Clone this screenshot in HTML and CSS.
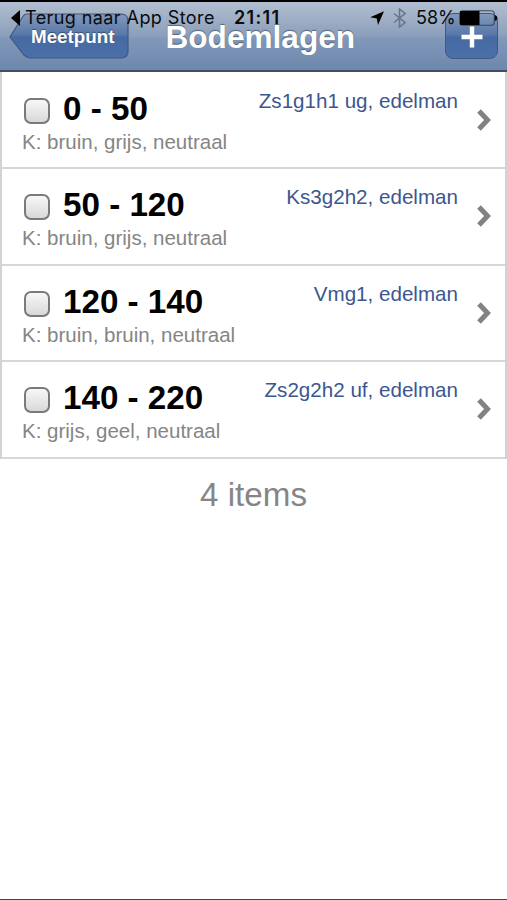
FILE: index.html
```html
<!DOCTYPE html>
<html lang="nl">
<head>
<meta charset="utf-8">
<title>Bodemlagen</title>
<link rel="stylesheet" href="styles.css">
</head>
<body>
<header class="navbar">
  <div class="back">
    <svg class="back-shape" width="120" height="48" viewBox="0 0 120 48">
      <defs><linearGradient id="b" x1="0" y1="0" x2="0" y2="1"><stop offset="0" stop-color="#8399ba"/><stop offset=".48" stop-color="#5877a8"/><stop offset=".52" stop-color="#4669a3"/><stop offset="1" stop-color="#4a6fa9"/></linearGradient></defs>
      <path d="M18 1H112Q119 1 119 8V38Q119 45 112 45H22Q18 45 15 42L1 24L13 5Q15 1 18 1Z" fill="url(#b)" stroke="#41597d" stroke-width="1.2"/>
    </svg>
    <span class="back-label">Meetpunt</span>
  </div>
  <h1 class="title">Bodemlagen</h1>
  <div class="add">
    <svg width="22" height="22" viewBox="0 0 22 22"><path d="M11 0.5V21.5M.5 11H21.5" stroke="#fff" stroke-width="4.4"/></svg>
  </div>
  <div class="status">
    <svg class="caret" width="9" height="16" viewBox="0 0 9 16"><path d="M0 8L9 0V16Z"/></svg>
    <span class="return">Terug naar App Store</span>
    <span class="clock">21:11</span>
    <svg class="loc" width="14" height="14" viewBox="0 0 14 14"><path d="M14 .2L8 14L6.8 7.4L.2 6.2Z"/></svg>
    <svg class="bt" width="13" height="20" viewBox="0 0 13 20"><path d="M1 5.5L12 14.5L6.5 19V1L12 5.5L1 14.5" fill="none" stroke="#66758c" stroke-width="1.5"/></svg>
    <span class="percent">58%</span>
    <svg class="battery" width="39" height="16" viewBox="0 0 39 16"><rect x=".7" y=".7" width="34.6" height="14.6" rx="3" fill="none" stroke="#394a63" stroke-width="1.1"/><path d="M1 1H20.5V15H1ZM35.7 5Q38.4 5.5 38.4 8T35.7 11Z"/></svg>
  </div>
</header>
<main>
  <ul class="list">
    <li class="row">
      <div class="main"><div class="head"><span class="check"></span><h2>0 - 50</h2></div><p class="meta">K: bruin, grijs, neutraal</p></div>
      <span class="detail">Zs1g1h1 ug, edelman</span>
      <svg class="chevron" width="15" height="22" viewBox="0 0 15 22"><path d="M2 2L10.5 11L2 20"/></svg>
    </li>
    <li class="row">
      <div class="main"><div class="head"><span class="check"></span><h2>50 - 120</h2></div><p class="meta">K: bruin, grijs, neutraal</p></div>
      <span class="detail">Ks3g2h2, edelman</span>
      <svg class="chevron" width="15" height="22" viewBox="0 0 15 22"><path d="M2 2L10.5 11L2 20"/></svg>
    </li>
    <li class="row">
      <div class="main"><div class="head"><span class="check"></span><h2>120 - 140</h2></div><p class="meta">K: bruin, bruin, neutraal</p></div>
      <span class="detail">Vmg1, edelman</span>
      <svg class="chevron" width="15" height="22" viewBox="0 0 15 22"><path d="M2 2L10.5 11L2 20"/></svg>
    </li>
    <li class="row">
      <div class="main"><div class="head"><span class="check"></span><h2>140 - 220</h2></div><p class="meta">K: grijs, geel, neutraal</p></div>
      <span class="detail">Zs2g2h2 uf, edelman</span>
      <svg class="chevron" width="15" height="22" viewBox="0 0 15 22"><path d="M2 2L10.5 11L2 20"/></svg>
    </li>
  </ul>
  <p class="count">4 items</p>
</main>
</body>
</html>
```
FILE: styles.css
```css
* { box-sizing: border-box; }
body {
  margin: 0;
  height: 900px;
  overflow: hidden;
  background: #fff;
  border-bottom: 1px solid #454545;
  font-family: "Liberation Sans", Arial, sans-serif;
  color: #000;
}
h1, h2, p, ul { margin: 0; padding: 0; }
svg { display: block; }
.navbar {
  position: relative;
  height: 72px;
  padding: 11px 9px 0;
  display: flex;
  align-items: flex-start;
  justify-content: space-between;
  border-top: 2px solid #000;
  border-bottom: 2px solid #434e5e;
  background: linear-gradient(#b2bed0 0, #8b9fbb 34px, #8198b9 36px, #6d87ad 100%);
}
.back {
  display: grid;
  width: 120px;
  height: 48px;
}
.back-shape, .back-label { grid-area: 1 / 1; }
.back-label {
  padding: 13px 0 0 22px;
  font-size: 18.8px;
  line-height: 22px;
  font-weight: bold;
  color: #fff;
  text-shadow: 0 -1px 1px rgba(0, 0, 0, .4);
}
.title {
  margin-right: 53px;
  padding: 5px 0 0;
  font-size: 31.6px;
  line-height: 38px;
  color: #fff;
  text-shadow: 0 -1px 1px rgba(0, 0, 0, .4);
  width: 190px;
  white-space: nowrap;
}
.add {
  width: 53px;
  height: 46px;
  display: flex;
  justify-content: center;
  padding-top: 12px;
  border: 1px solid #41597d;
  border-radius: 8px;
  background: linear-gradient(#8399ba, #5877a8 48%, #4669a3 52%, #4a6fa9);
}
.status {
  position: absolute;
  inset: 4px 9px auto 11px;
  height: 24px;
  display: flex;
  align-items: center;
  font: 18px/24px Inter, sans-serif;
  color: #080b10;
  white-space: nowrap;
}
.return { margin-left: 5px; width: 209px; letter-spacing: .42px; }
.clock { width: 136px; font-weight: 600; letter-spacing: 1.3px; }
.bt { margin-left: 9px; }
.percent { margin-left: 10px; width: 43px; }
.list {
  list-style: none;
  padding-top: 1px;
  border: solid #d3d3d3;
  border-width: 0 2px;
}
.row {
  height: 96.4px;
  padding: 0 13px 0 20px;
  display: flex;
  align-items: flex-start;
  border-bottom: 2px solid #d7d7d7;
}
.main { flex: 1; padding-top: 16px; }
.head { display: flex; align-items: center; height: 40px; }
.check {
  width: 26px;
  height: 26px;
  margin: 4px 13px 0 2px;
  border: 2px solid #7a7a7a;
  border-radius: 7px;
  background: linear-gradient(#f7f7f7, #d9d9d9);
}
h2 { font-size: 33.2px; line-height: 40px; }
.meta { margin-top: 1px; font-size: 20.5px; line-height: 24px; color: #858585; }
.detail { padding-top: 16px; font-size: 20.6px; line-height: 24px; color: #3c5790; }
.chevron { margin: 36px 0 0 19px; }
.chevron path { fill: none; stroke: #828282; stroke-width: 5; }
.count {
  padding-top: 16px;
  font-size: 33.2px;
  line-height: 40px;
  text-align: center;
  color: #858585;
}
```
